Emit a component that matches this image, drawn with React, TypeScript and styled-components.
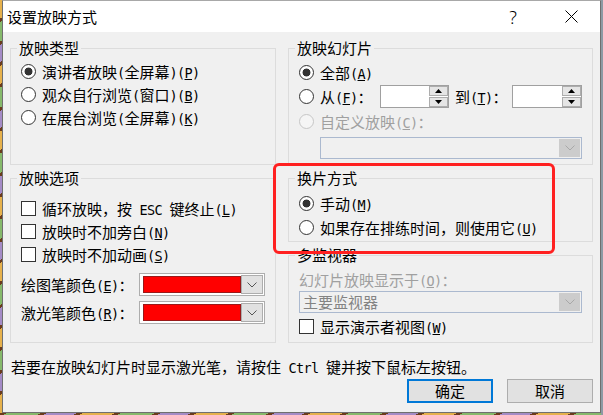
import React from "react";
import styled, { createGlobalStyle } from "styled-components";

const Global = createGlobalStyle`
  html, body { margin: 0; padding: 0; }
  body {
    width: 603px;
    height: 415px;
    overflow: hidden;
    background:
      linear-gradient(to right, transparent 601px, #8d9aa4 601px),
      repeating-linear-gradient(150deg, #e6b14c 0 16px, #6a3b1c 16px 19px, #86b96b 19px 36px, #6a3b1c 36px 39px, #a48bc6 39px 54px, #6a3b1c 54px 57px);
    font-family: "Noto Sans CJK SC", sans-serif;
  }
`;

const Desktop = styled.div`
  width: 603px;
  height: 415px;
  padding-left: 2px;
  box-sizing: border-box;
`;

const Window = styled.div`
  position: relative;
  width: 599px;
  height: 413px;
  box-sizing: border-box;
  border: 1px solid #6f6f6f;
  border-top-color: #a8a8a8;
  background: #f0f0f0;
  display: flex;
  flex-direction: column;
  font-family: "Noto Sans CJK SC", sans-serif;
  font-size: 15px;
  color: #000;
`;

const TitleBar = styled.div`
  height: 31px;
  flex: none;
  background: #fff;
  display: flex;
  align-items: center;
`;

const TitleText = styled.div`
  flex: 1;
  padding-left: 4px;
  line-height: 31px;
  font-size: 15px;
`;

const TitleButton = styled.div`
  width: 58px;
  height: 31px;
  display: flex;
  align-items: center;
  justify-content: center;
`;

const HelpGlyph = styled.span`
  font-family: "Noto Sans", sans-serif;
  font-weight: 300;
  font-size: 18px;
  line-height: 18px;
`;

const Client = styled.div`
  flex: 1;
  padding: 8px 7px 9px 7px;
  display: flex;
  flex-direction: column;
`;

const Columns = styled.div`
  display: grid;
  grid-template-columns: 266px 305px;
  column-gap: 12px;
  height: 303px;
`;

const Column = styled.div`
  display: flex;
  flex-direction: column;
  gap: 5px;
`;

const Group = styled.fieldset<{ $h: number; $pt: number }>`
  margin: 0;
  padding: ${(p) => p.$pt}px 9px 0 10px;
  border: 1px solid #dcdcdc;
  height: ${(p) => p.$h}px;
  box-sizing: border-box;
  min-width: 0;
  display: flex;
  flex-direction: column;
`;

const Legend = styled.legend`
  padding: 0 2px;
  margin-left: -4px;
  line-height: 16px;
  font-size: 15px;
`;

const Row = styled.div<{ $h: number; $mt?: number }>`
  display: flex;
  align-items: center;
  height: ${(p) => p.$h}px;
  margin-top: ${(p) => p.$mt ?? 0}px;
  white-space: nowrap;
  flex: none;
`;

const Text = styled.span<{ $disabled?: boolean }>`
  color: ${(p) => (p.$disabled ? "#a0a0a0" : "#000")};
  white-space: pre;
`;

const FixedText = styled(Text)<{ $w: number; $ml?: number }>`
  width: ${(p) => p.$w}px;
  margin-left: ${(p) => p.$ml ?? 0}px;
  flex: none;
`;

const Half = styled.span`
  font-family: "DejaVu Sans Mono", monospace;
  font-size: 13.5px;
  letter-spacing: -0.63px;
  white-space: pre;
`;

const Radio = styled.span<{ $checked?: boolean; $disabled?: boolean }>`
  width: 15px;
  height: 15px;
  box-sizing: border-box;
  border-radius: 50%;
  border: 1px solid ${(p) => (p.$disabled ? "#c6c6c6" : "#333")};
  background: ${(p) =>
    p.$checked
      ? "radial-gradient(circle, #333 0 3.6px, #fff 4.3px)"
      : p.$disabled
      ? "#f5f5f5"
      : "#fff"};
  flex: none;
  margin-right: 6px;
`;

const Check = styled.span`
  width: 15px;
  height: 15px;
  box-sizing: border-box;
  border: 1px solid #333;
  background: #fff;
  flex: none;
  margin-right: 6px;
`;

const SpinBox = styled.div<{ $w: number }>`
  width: ${(p) => p.$w}px;
  height: 23px;
  box-sizing: border-box;
  border: 1px solid #a0a0a0;
  background: #fff;
  display: flex;
  justify-content: flex-end;
  flex: none;
`;

const SpinButtons = styled.div`
  width: 19px;
  display: flex;
  flex-direction: column;
  gap: 1px;
`;

const SpinBtn = styled.div`
  flex: 1;
  box-sizing: border-box;
  border: 1px solid #adadad;
  background: #e5e5e5;
  display: flex;
  align-items: center;
  justify-content: center;
`;

const DisabledCombo = styled.div<{ $ml?: number; $w: number }>`
  width: ${(p) => p.$w}px;
  margin-left: ${(p) => p.$ml ?? 0}px;
  height: 22px;
  box-sizing: border-box;
  border: 1px solid #abb9cf;
  background: #f0f0f0;
  display: flex;
  padding: 1px;
  color: #838383;
  flex: none;
`;

const ComboValue = styled.div`
  flex: 1;
  padding-left: 2px;
  line-height: 18px;
`;

const DisabledArrow = styled.div`
  width: 21px;
  background: #cccccc;
  display: flex;
  align-items: center;
  justify-content: center;
`;

const ColorRow = styled.div<{ $mt: number }>`
  display: grid;
  grid-template-columns: 118px 126px;
  align-items: center;
  height: 23px;
  margin-top: ${(p) => p.$mt}px;
  white-space: nowrap;
  flex: none;
`;

const ColorCombo = styled.div`
  height: 23px;
  box-sizing: border-box;
  border: 1px solid #adadad;
  background: #fff;
  padding: 1px;
  display: flex;
`;

const Swatch = styled.div<{ $color: string }>`
  flex: 1;
  margin: 1px 0 1px 2px;
  box-sizing: border-box;
  background: ${(p) => p.$color};
  border: 1px solid #9a1a1a;
`;

const ComboButton = styled.div`
  width: 22px;
  box-sizing: border-box;
  border: 1px solid #adadad;
  background: #e1e1e1;
  display: flex;
  align-items: center;
  justify-content: center;
`;

const Note = styled.div`
  margin-top: 14px;
  line-height: 20px;
  height: 20px;
  padding-left: 1px;
  white-space: nowrap;
`;

const ButtonRow = styled.div`
  margin-top: 2px;
  display: flex;
  justify-content: flex-end;
  gap: 14px;
`;

const Button = styled.button<{ $primary?: boolean }>`
  width: 86px;
  height: 24px;
  box-sizing: border-box;
  border: ${(p) => (p.$primary ? "2px solid #0078d7" : "1px solid #adadad")};
  background: #e1e1e1;
  font-family: "Noto Sans CJK SC", sans-serif;
  font-size: 15px;
  color: #000;
  padding: 0;
  line-height: 18px;
`;

const Highlight = styled.div`
  position: absolute;
  left: 270px;
  top: 162px;
  width: 282px;
  height: 91px;
  box-sizing: border-box;
  border: 3px solid #ff2020;
  border-radius: 6px;
  pointer-events: none;
`;

function renderText(s: string): React.ReactNode[] {
  const out: React.ReactNode[] = [];
  let i = 0;
  let key = 0;
  while (i < s.length) {
    const ascii = s.charCodeAt(i) < 128;
    let j = i;
    const parts: React.ReactNode[] = [];
    let buf = "";
    while (j < s.length && (s.charCodeAt(j) < 128) === ascii) {
      if (s[j] === "&" && j + 1 < s.length) {
        if (buf) {
          parts.push(buf);
          buf = "";
        }
        parts.push(<u key={j}>{s[j + 1]}</u>);
        j += 2;
      } else {
        buf += s[j];
        j++;
      }
    }
    if (buf) parts.push(buf);
    out.push(
      ascii ? (
        <Half key={key++}>{parts}</Half>
      ) : (
        <React.Fragment key={key++}>{parts}</React.Fragment>
      )
    );
    i = j;
  }
  return out;
}

const Chevron = ({ color }: { color: string }) => (
  <svg width="10" height="6" viewBox="0 0 10 6">
    <polyline points="0.5,0.5 5,5 9.5,0.5" fill="none" stroke={color} strokeWidth="1" />
  </svg>
);

const Tri = ({ up }: { up?: boolean }) => (
  <svg width="7" height="4" viewBox="0 0 7 4">
    <polygon points={up ? "0,4 7,4 3.5,0" : "0,0 7,0 3.5,4"} fill="#000" />
  </svg>
);

const Spin = ({ w }: { w: number }) => (
  <SpinBox $w={w}>
    <SpinButtons>
      <SpinBtn>
        <Tri up />
      </SpinBtn>
      <SpinBtn>
        <Tri />
      </SpinBtn>
    </SpinButtons>
  </SpinBox>
);

const RadioRow = ({
  h,
  label,
  checked,
  disabled,
}: {
  h: number;
  label: string;
  checked?: boolean;
  disabled?: boolean;
}) => (
  <Row $h={h}>
    <Radio $checked={checked} $disabled={disabled} />
    <Text $disabled={disabled}>{renderText(label)}</Text>
  </Row>
);

const CheckRow = ({ h, label, mt }: { h: number; label: string; mt?: number }) => (
  <Row $h={h} $mt={mt}>
    <Check />
    <Text>{renderText(label)}</Text>
  </Row>
);

const ColorPick = ({ label, mt }: { label: string; mt: number }) => (
  <ColorRow $mt={mt}>
    <Text>{renderText(label)}</Text>
    <ColorCombo>
      <Swatch $color="#ff0000" />
      <ComboButton>
        <Chevron color="#555" />
      </ComboButton>
    </ColorCombo>
  </ColorRow>
);

export default function App() {
  return (
    <>
      <Global />
      <Desktop>
        <Window>
          <TitleBar>
            <TitleText>设置放映方式</TitleText>
            <TitleButton>
              <HelpGlyph>?</HelpGlyph>
            </TitleButton>
            <TitleButton>
              <svg width="13" height="13" viewBox="0 0 13 13">
                <path d="M0.5 0.5 L12.5 12.5 M12.5 0.5 L0.5 12.5" stroke="#000" strokeWidth="1" />
              </svg>
            </TitleButton>
          </TitleBar>
          <Client>
            <Columns>
              <Column>
                <Group $h={125} $pt={4}>
                  <Legend>放映类型</Legend>
                  <RadioRow h={23} checked label="演讲者放映(全屏幕)(&P)" />
                  <RadioRow h={23} label="观众自行浏览(窗口)(&B)" />
                  <RadioRow h={23} label="在展台浏览(全屏幕)(&K)" />
                </Group>
                <Group $h={173} $pt={11}>
                  <Legend>放映选项</Legend>
                  <CheckRow h={23} label="循环放映，按 ESC 键终止(&L)" />
                  <CheckRow h={23} label="放映时不加旁白(&N)" />
                  <CheckRow h={23} label="放映时不加动画(&S)" />
                  <ColorPick mt={7} label="绘图笔颜色(&E)：" />
                  <ColorPick mt={5} label="激光笔颜色(&R)：" />
                </Group>
              </Column>
              <Column>
                <Group $h={125} $pt={4}>
                  <Legend>放映幻灯片</Legend>
                  <RadioRow h={24} checked label="全部(&A)" />
                  <Row $h={25}>
                    <Radio />
                    <FixedText $w={60}>{renderText("从(&F)：")}</FixedText>
                    <Spin w={69} />
                    <FixedText $w={57} $ml={6}>
                      {renderText("到(&T)：")}
                    </FixedText>
                    <Spin w={70} />
                  </Row>
                  <RadioRow h={24} disabled label="自定义放映(&C)：" />
                  <Row $h={22} $mt={4}>
                    <DisabledCombo $ml={21} $w={262}>
                      <ComboValue />
                      <DisabledArrow>
                        <Chevron color="#a8a8a8" />
                      </DisabledArrow>
                    </DisabledCombo>
                  </Row>
                </Group>
                <Group $h={72} $pt={5}>
                  <Legend>换片方式</Legend>
                  <RadioRow h={24} checked label="手动(&M)" />
                  <RadioRow h={24} label="如果存在排练时间，则使用它(&U)" />
                </Group>
                <Group $h={96} $pt={5}>
                  <Legend>多监视器</Legend>
                  <Row $h={22}>
                    <Text $disabled>{renderText("幻灯片放映显示于(&O)：")}</Text>
                  </Row>
                  <Row $h={22} $mt={1}>
                    <DisabledCombo $w={283}>
                      <ComboValue>主要监视器</ComboValue>
                      <DisabledArrow>
                        <Chevron color="#a8a8a8" />
                      </DisabledArrow>
                    </DisabledCombo>
                  </Row>
                  <CheckRow h={22} mt={2} label="显示演示者视图(&W)" />
                </Group>
              </Column>
            </Columns>
            <Note>{renderText("若要在放映幻灯片时显示激光笔，请按住 Ctrl 键并按下鼠标左按钮。")}</Note>
            <ButtonRow>
              <Button $primary>确定</Button>
              <Button>取消</Button>
            </ButtonRow>
          </Client>
          <Highlight />
        </Window>
      </Desktop>
    </>
  );
}
